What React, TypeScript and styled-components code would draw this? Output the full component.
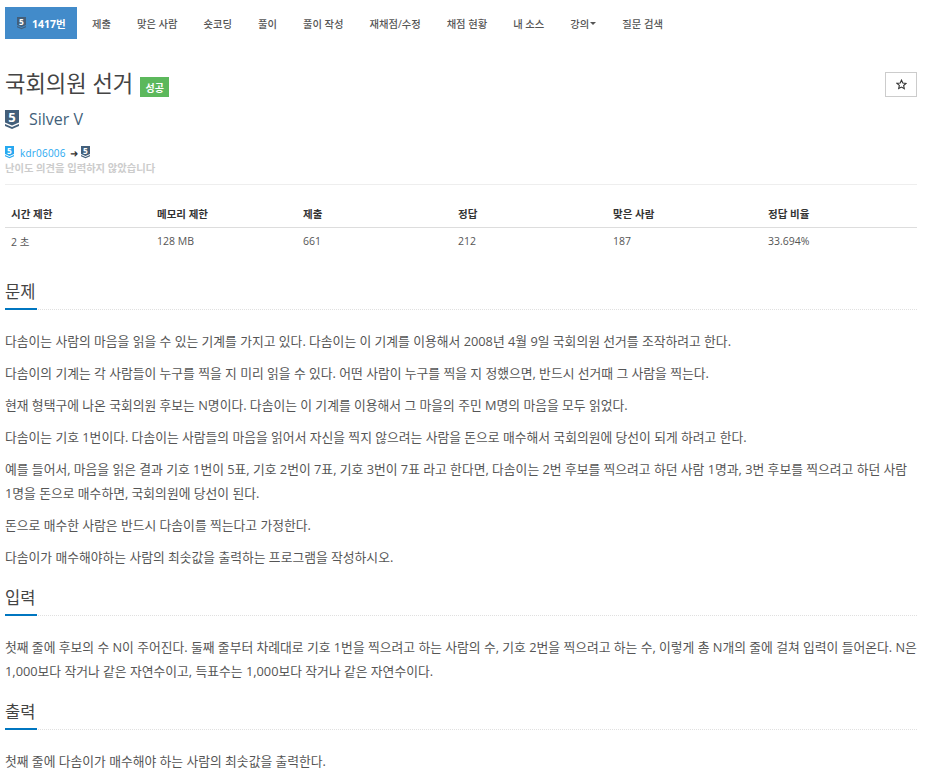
import React from 'react';
import styled, { createGlobalStyle } from 'styled-components';

const FONT = '"Open Sans", "Noto Sans CJK KR", sans-serif';

const GlobalStyle = createGlobalStyle`
  html, body {
    margin: 0;
    padding: 0;
    background: #fff;
    font-family: ${FONT};
    color: #333;
  }
`;

const menu = ['제출', '맞은 사람', '숏코딩', '풀이', '풀이 작성', '재채점/수정', '채점 현황', '내 소스'];

const heads = ['시간 제한', '메모리 제한', '제출', '정답', '맞은 사람', '정답 비율'];
const values = ['2 초', '128 MB', '661', '212', '187', '33.694%'];
const widths = [146, 146, 155, 155, 155, 155];

function Tier({ width, color }: { width: number; color: string }) {
  return (
    <svg width={width} height={(width * 19) / 14} viewBox="0 0 14 19" overflow="visible" aria-hidden="true">
      <path d="M0 0H14V12.500L7 15.500 0 12.500Z" fill={color} />
      <path d="M0 14 7 17 14 14V16L7 19 0 16Z" fill={color} />
      <text x="7" y="12" textAnchor="middle" fontSize="13" fontWeight="700" fontFamily="Open Sans, sans-serif" fill="#fff">5</text>
    </svg>
  );
}

export default function App() {
  return (
    <Page>
      <GlobalStyle />
      <Tabs>
        <ActiveTab>
          <Tier width={9} color="#435f7a" />
          <span>1417번</span>
        </ActiveTab>
        {menu.map((m) => (
          <Tab key={m}>{m}</Tab>
        ))}
        <Tab>
          강의<Caret />
        </Tab>
        <Tab>질문 검색</Tab>
      </Tabs>

      <TitleRow>
        <Title>국회의원 선거</Title>
        <Badge>성공</Badge>
        <StarButton>
          <svg width="11" height="11" viewBox="0 0 24 24" fill="none" stroke="#333" strokeWidth="2.4" aria-hidden="true">
            <path d="M12 2.5l2.9 6.3 6.9.8-5.1 4.7 1.4 6.8L12 17.6 5.900 20.900l1.400-6.800-5.100-4.700 6.900-.8z" />
          </svg>
        </StarButton>
      </TitleRow>

      <TierRow>
        <Tier width={14} color="#435f7a" />
        <TierName>Silver V</TierName>
      </TierRow>

      <Opinion>
        <Tier width={9} color="#27a8f0" />
        <UserLink>kdr06006</UserLink>
        <Arrow>➜</Arrow>
        <Tier width={9} color="#435f7a" />
      </Opinion>
      <NoOpinion>난이도 의견을 입력하지 않았습니다</NoOpinion>
      <Divider />

      <Table>
        <colgroup>
          {widths.map((w, i) => (
            <col key={i} width={w} />
          ))}
        </colgroup>
        <thead>
          <tr>
            {heads.map((h) => (
              <Th key={h}>{h}</Th>
            ))}
          </tr>
        </thead>
        <tbody>
          <tr>
            {values.map((v) => (
              <Td key={v}>{v}</Td>
            ))}
          </tr>
        </tbody>
      </Table>

      <Section>
        <Headline>
          <HeadlineText>문제</HeadlineText>
        </Headline>
        <Body>
          <P>다솜이는 사람의 마음을 읽을 수 있는 기계를 가지고 있다. 다솜이는 이 기계를 이용해서 2008년 4월 9일 국회의원 선거를 조작하려고 한다.</P>
          <P>다솜이의 기계는 각 사람들이 누구를 찍을 지 미리 읽을 수 있다. 어떤 사람이 누구를 찍을 지 정했으면, 반드시 선거때 그 사람을 찍는다.</P>
          <P>현재 형택구에 나온 국회의원 후보는 N명이다. 다솜이는 이 기계를 이용해서 그 마을의 주민 M명의 마음을 모두 읽었다.</P>
          <P>다솜이는 기호 1번이다. 다솜이는 사람들의 마음을 읽어서 자신을 찍지 않으려는 사람을 돈으로 매수해서 국회의원에 당선이 되게 하려고 한다.</P>
          <P>예를 들어서, 마음을 읽은 결과 기호 1번이 5표, 기호 2번이 7표, 기호 3번이 7표 라고 한다면, 다솜이는 2번 후보를 찍으려고 하던 사람 1명과, 3번 후보를 찍으려고 하던 사람 1명을 돈으로 매수하면, 국회의원에 당선이 된다.</P>
          <P>돈으로 매수한 사람은 반드시 다솜이를 찍는다고 가정한다.</P>
          <P>다솜이가 매수해야하는 사람의 최솟값을 출력하는 프로그램을 작성하시오.</P>
        </Body>
      </Section>

      <Section>
        <Headline>
          <HeadlineText>입력</HeadlineText>
        </Headline>
        <Body>
          <P>첫째 줄에 후보의 수 N이 주어진다. 둘째 줄부터 차례대로 기호 1번을 찍으려고 하는 사람의 수, 기호 2번을 찍으려고 하는 수, 이렇게 총 N개의 줄에 걸쳐 입력이 들어온다. N은 1,000보다 작거나 같은 자연수이고, 득표수는 1,000보다 작거나 같은 자연수이다.</P>
        </Body>
      </Section>

      <Section>
        <Headline>
          <HeadlineText>출력</HeadlineText>
        </Headline>
        <Body>
          <P>첫째 줄에 다솜이가 매수해야 하는 사람의 최솟값을 출력한다.</P>
        </Body>
      </Section>
    </Page>
  );
}

const Page = styled.div`
  width: 912px;
  height: 776px;
  overflow: hidden;
  padding: 7px 8px 0 5px;
`;

const Tabs = styled.ul`
  display: flex;
  margin: 0;
  padding: 0;
  list-style: none;
  height: 32px;
`;

const Tab = styled.li`
  display: flex;
  align-items: center;
  padding: 0 13px;
  font-size: 10.3px;
  font-weight: 500;
  color: #555;
  white-space: nowrap;
`;

const ActiveTab = styled(Tab)`
  gap: 6px;
  padding: 0 12px;
  background: #428bca;
  color: #fff;
  font-weight: 700;
  font-size: 10.5px;
  width: 48px;
  margin-right: 2px;
`;

const Caret = styled.i`
  display: inline-block;
  margin-left: 1px;
  border-top: 3px solid #555;
  border-left: 3px solid transparent;
  border-right: 3px solid transparent;
`;

const TitleRow = styled.div`
  display: flex;
  align-items: center;
  margin-top: 32px;
  height: 26px;
`;

const Title = styled.h1`
  margin: 0;
  font-size: 22.2px;
  font-weight: 400;
  color: #444;
  line-height: 26px;
`;

const Badge = styled.span`
  margin: 6px 0 0 7px;
  width: 29px;
  height: 20px;
  display: flex;
  align-items: center;
  justify-content: center;
  background: #5cb85c;
  color: #fff;
  font-size: 10px;
  font-weight: 700;
`;

const StarButton = styled.button`
  margin-left: auto;
  width: 32px;
  height: 25px;
  display: flex;
  align-items: center;
  justify-content: center;
  padding: 0;
  background: #fff;
  border: 1px solid #ccc;
`;

const TierRow = styled.div`
  display: flex;
  align-items: center;
  gap: 10px;
  margin-top: 12px;
  height: 20px;
`;

const TierName = styled.span`
  font-size: 16px;
  color: #435f7a;
`;

const Opinion = styled.div`
  display: flex;
  align-items: center;
  gap: 5px;
  margin-top: 17px;
  height: 13px;
  font-size: 10px;
`;

const UserLink = styled.span`
  margin-left: 1px;
  color: #27a8f0;
  letter-spacing: 0.2px;
`;

const Arrow = styled.span`
  margin: 0 -2px 0 -1px;
  color: #333;
  font-size: 10px;
`;

const NoOpinion = styled.div`
  margin-top: 2px;
  font-size: 10.300px;
  line-height: 15px;
  font-weight: 700;
  color: #ccc;
`;

const Divider = styled.hr`
  margin: 8px 0 0;
  border: 0;
  border-top: 1px solid #eee;
`;

const Table = styled.table`
  width: 912px;
  margin: 13px 0 22px;
  border-collapse: collapse;
  table-layout: fixed;
`;

const Th = styled.th`
  padding: 1px 6px 0;
  height: 28px;
  text-align: left;
  font-size: 10.500px;
  font-weight: 700;
  color: #333;
  border-bottom: 1px solid #ddd;
`;

const Td = styled.td`
  padding: 0 6px;
  height: 26px;
  font-size: 10.500px;
  color: #555;
`;

const Section = styled.section`
  margin-top: 13px;
`;

const Headline = styled.div`
  height: 33px;
  border-bottom: 1px dotted #e0e0e0;
`;

const HeadlineText = styled.h2`
  display: inline-block;
  margin: 0;
  height: 34px;
  box-sizing: border-box;
  width: 32px;
  font-size: 16.500px;
  font-weight: 400;
  line-height: 32px;
  color: #444;
  border-bottom: 2px solid #0076c0;
`;

const Body = styled.div`
  padding-top: 19px;
`;

const P = styled.p`
  margin: 0 0 8px;
  font-size: 12.800px;
  line-height: 24px;
  color: #555;
`;
